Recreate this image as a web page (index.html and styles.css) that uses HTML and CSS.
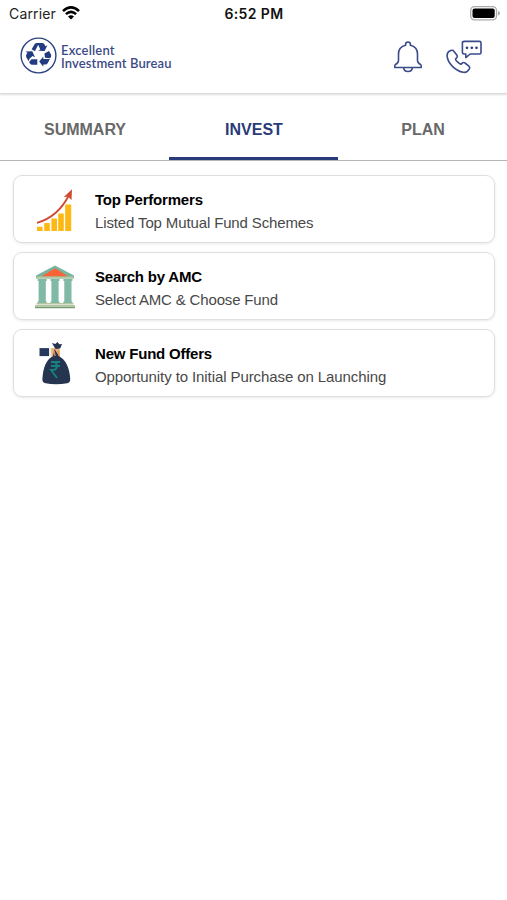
FILE: index.html
```html
<!DOCTYPE html>
<html lang="en">
<head>
<meta charset="utf-8">
<title>Excellent Investment Bureau</title>
<link rel="stylesheet" href="styles.css">
</head>
<body>
<div class="status">
  <div class="carrier"><span>Carrier</span>
    <svg width="18" height="14" viewBox="0 0 18 14" fill="none" stroke="#000" stroke-width="2.5"><path d="M1 5.2Q9-2.4 17 5.2M3.9 8.2Q9 3.5 14.1 8.2"/><path d="M6 10.5Q9 7.8 12 10.5L9 13.6Z" fill="#000" stroke="none"/></svg>
  </div>
  <div class="time">6:52 PM</div>
  <svg class="battery" width="30" height="15" viewBox="0 0 30 15"><rect x=".7" y=".7" width="25.8" height="13.1" rx="3.8" fill="#fff" stroke="#aaa" stroke-width="1.3"/><rect x="2.5" y="2.5" width="22.2" height="9.5" rx="2" fill="#000"/><path d="M28 5q2 .5 2 2.3T28 9.5z" fill="#aaa"/></svg>
</div>
<header class="header">
  <div class="brand">
    <svg width="37" height="37" viewBox="0 0 37 37"><circle cx="18.5" cy="18.5" r="17.4" fill="none" stroke="#2f4382" stroke-width="1.4"/>
      <g fill="#233b80">
        <path d="M11.6 12.2 14.6 7.2Q15.3 6 16.8 6L19 6.2 14.9 14.2ZM17.4 6H22.2Q23.6 6 24.3 7.2L25.5 9.2 27.4 8.2 24.6 14.1 18.3 13.8 20.3 12.5Z"/>
        <path d="M24.4 16.6 29 13.9 31 17.5Q31.6 18.7 30.9 20L30.1 21.3 25 20.8ZM29.9 22 27.8 26Q27 27.5 25.4 27.5H23.3V29.8L19.2 24.5 23.3 19.6V22Z"/>
        <path d="M17.3 22.3V27.8H12.2Q10.7 27.8 10 26.5L9.1 24.9 11.5 22.3ZM8.6 24.2 6.3 20.2Q5.6 19 6.4 17.6L7.4 15.8 5.5 14.6 12.3 14.2 15 20.3 12.5 18.9 9.5 21.8Z"/>
      </g></svg>
    <div class="name"><span class="n1">Excellent</span><span class="n2">Investment Bureau</span></div>
  </div>
  <div class="actions">
    <svg width="28" height="32" viewBox="0 0 28 32" fill="none" stroke="#3b4b89" stroke-width="1.6" stroke-linejoin="round"><path d="M11.6 4.3V3.4a2.4 2.4 0 0 1 4.8 0v.9C21.2 5.5 23.5 9 23.5 13v6.2c0 2.2.8 3.2 2.7 4.1.6.3 1 .8 1 1.6v1.6H.8v-1.6c0-.8.4-1.3 1-1.6 1.9-.9 2.7-1.9 2.7-4.1V13c0-4 2.3-7.5 7.1-8.7ZM9.7 26.7c.3 5 8.3 5 8.6 0"/></svg>
    <svg width="36" height="34" viewBox="0 0 36 34" fill="none" stroke="#3b4b89" stroke-width="1.6" stroke-linejoin="round"><path d="M18.2 1.4H33.5Q35 1.4 35 2.9V12.6Q35 14 33.5 14H24.2L19.8 17.6V14H18.2Q16.4 14 16.4 12.6V2.9Q16.4 1.4 18.2 1.4Z"/><path d="M3.2 11.2 5.4 10.3Q7 10 8 11.4L11 15.2Q11.9 16.6 10.7 17.8L9.5 19.1Q9.4 20.1 12 22.3 14.2 24.3 15.2 24.1L16.5 22.9Q17.8 22 19 23L22.9 26.1Q24.4 27.4 23.3 29L21.7 31Q20.4 32.8 17.2 32.3 11.5 31.2 6.4 26.3 1.6 21.5 1.1 16.2 1 12.5 3.2 11.2Z"/><g fill="#304184" stroke="none"><circle cx="21" cy="7.8" r="1.35"/><circle cx="25.8" cy="7.8" r="1.35"/><circle cx="30.5" cy="7.8" r="1.35"/></g></svg>
  </div>
</header>
<nav class="tabs">
  <div class="tab"><span>SUMMARY</span></div>
  <div class="tab active"><span>INVEST</span></div>
  <div class="tab"><span>PLAN</span></div>
</nav>
<main class="list">
  <section class="card">
    <svg class="icon chart" width="40" height="44" viewBox="0 0 40 44"><path fill="#fdb813" d="M2 37.7h5.6V42H2zM9.2 34h5.6v8H9.2zM16.4 29.5H22V42h-5.6zM23.2 24.5h5.6V42h-5.6zM30.2 15.5h6V42h-6z"/><path d="M2 33.8Q23 28 34 6" fill="none" stroke="#cf4b32" stroke-width="1.8"/><path fill="#cf4b32" d="M37 .3 36.5 11 32.7 7.5 28.6 8.3Z"/></svg>
    <div class="text"><h2>Top Performers</h2><p class="s1">Listed Top Mutual Fund Schemes</p></div>
  </section>
  <section class="card">
    <svg class="icon" width="40" height="44" viewBox="0 0 40 44"><path fill="#78b49e" d="M20 .4 39 10.4v3.2H1v-3.2z"/><path fill="#fa6336" d="M20 3.2 33.3 11.4H6.3z"/><path fill="#b5c7a2" d="M1.5 11.4h37v2.1h-37zM1.5 38h37v1.5h-37zM0 40h40v3H0z"/><path fill="#80b9a5" d="M2.7 14h9v2h-.9v20.5h.9V38h-9v-1.5h.9V16h-.9zM15.5 14h9v2h-.9v20.5h.9V38h-9v-1.5h.9V16h-.9zM28.4 14h9v2h-.9v20.5h.9V38h-9v-1.5h.9V16h-.9z"/><path fill="#769c79" d="M0 42h40v1.2H0z"/></svg>
    <div class="text"><h2>Search by AMC</h2><p class="s2">Select AMC &amp; Choose Fund</p></div>
  </section>
  <section class="card">
    <svg class="icon" width="40" height="44" viewBox="0 0 40 44"><path fill="#24395d" d="M4.5 6.1H14v8H4.5z"/><path fill="#e9edf0" d="M14 6.1h2v8h-2z"/><path fill="#efb477" d="M16 6.2 23 5.5 25 8v8l-8.5.2z"/><path fill="#25344f" d="m16.9 1 3.4 1 2.3-1.9 1.6 2.2 2.8-.4L25.2 6.5 20.6 7 19 4.5ZM19.6 7l4.4 7.3q10 5.2 11.2 22.5c.2 2.8-.8 4-3 4.5-7.5 1.4-15 1.4-21.5 0-2.5-.5-3.6-1.8-3.3-4.5Q8.5 18.5 18 14.2Z"/><path d="m19 9 1.2 5M23 7.2l.7 6.2" stroke="#dd985d" stroke-width="1.2"/><path d="M16 20h9M16 24h9M16 20h2c5 0 5 8 0 8h-2l6 8" fill="none" stroke="#16817e" stroke-width="1.9"/></svg>
    <div class="text"><h2>New Fund Offers</h2><p class="s3">Opportunity to Initial Purchase on Launching</p></div>
  </section>
</main>
</body>
</html>
```
FILE: styles.css
```css
* { box-sizing: border-box; }
body { margin: 0; height: 900px; background: #fff; font-family: "Liberation Sans", Arial, sans-serif; overflow: hidden; }
svg { display: block; flex: none; }
.status { height: 28px; display: grid; grid-template-columns: 1fr auto 1fr; align-items: center; padding: 0 7px 0 9px; font: 14px/28px Inter, sans-serif; color: #222; }
.carrier { display: flex; align-items: center; gap: 6px; }
.carrier span { letter-spacing: .15px; }
.carrier svg { margin-top: -2px; }
.time { font-weight: 600; color: #111; font-size: 14px; letter-spacing: .4px; margin-right: 1px; }
.battery { justify-self: end; margin-top: -2px; }
.header { height: 66px; display: flex; justify-content: space-between; align-items: flex-start; padding: 9px 25px 0 20px; border-bottom: 1px solid #dcdcdc; box-shadow: 0 1px 2px #ddd; }
.brand { display: flex; gap: 4px; }
.name { display: flex; flex-direction: column; padding-top: 7px; font: 600 13px/13px Lato, sans-serif; color: #3c4b88; white-space: nowrap; }
.n1 { letter-spacing: .2px; }
.n2 { letter-spacing: .12px; }
.actions { display: flex; gap: 24px; padding-top: 3px; }
.actions svg:first-child { margin-top: 1px; }
.tabs { height: 67px; display: grid; grid-template-columns: repeat(3, 1fr); border-bottom: 1px solid #b5b5b5; }
.tab { display: flex; justify-content: center; padding: 26px 0 0 1px; font: bold 16px/20px "Liberation Sans", sans-serif; color: #686868; border-bottom: 3px solid transparent; }
.active { color: #293b78; border-color: #293b78; }
.list { padding: 14px 12px 0 13px; display: flex; flex-direction: column; gap: 9px; }
.card { height: 68px; display: flex; padding: 13px 0 0 21px; gap: 20px; border: 1px solid #dfdfdf; border-radius: 9px; box-shadow: 0 1px 3px #e8e8e8; }
.icon { margin-top: -1px; }
.chart { margin-top: 0; }
.text { white-space: nowrap; }
h2 { margin: 0; font-size: 15px; line-height: 22px; letter-spacing: -.2px; color: #000; }
p { margin: 1px 0 0; font-size: 15px; line-height: 22px; color: #484848; }
.s1 { letter-spacing: -.13px; }
.s2 { letter-spacing: -.16px; }
.s3 { letter-spacing: -.09px; }
```
